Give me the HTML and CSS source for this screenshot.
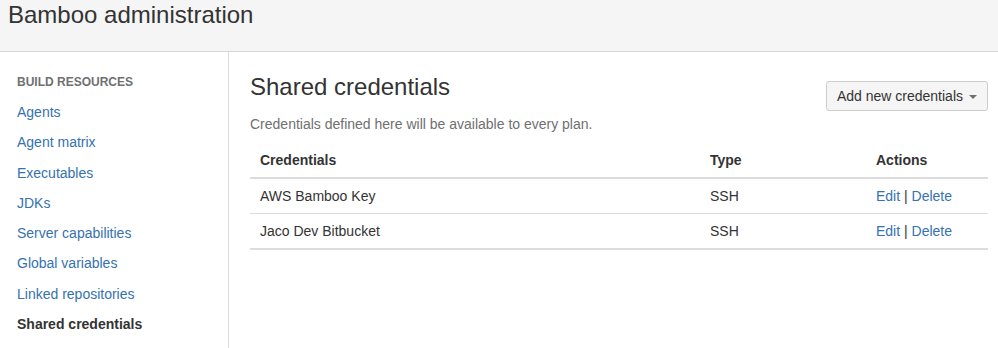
FILE: index.html
```html
<!DOCTYPE html>
<html lang="en">
<head>
    <meta charset="UTF-8">
    <title>Bamboo administration</title>
    <link rel="stylesheet" href="styles.css">
</head>
<body>
    <!-- Page header -->
    <header class="page-header">
        <h1 class="page-title">Bamboo administration</h1>
    </header>

    <div class="layout">
        <!-- Sidebar navigation -->
        <nav class="sidebar">
            <h3 class="nav-heading">BUILD RESOURCES</h3>
            <ul class="nav-list">
                <li><a href="#">Agents</a></li>
                <li><a href="#">Agent matrix</a></li>
                <li><a href="#">Executables</a></li>
                <li><a href="#">JDKs</a></li>
                <li><a href="#">Server capabilities</a></li>
                <li><a href="#">Global variables</a></li>
                <li><a href="#">Linked repositories</a></li>
                <li class="active">Shared credentials</li>
            </ul>
        </nav>

        <!-- Main content -->
        <main class="content">
            <div class="content-header">
                <h2 class="content-title">Shared credentials</h2>
                <button class="dropdown-btn">Add new credentials <span class="caret"></span></button>
            </div>
            <p class="description">Credentials defined here will be available to every plan.</p>

            <table class="cred-table">
                <thead>
                    <tr>
                        <th class="col-name">Credentials</th>
                        <th class="col-type">Type</th>
                        <th class="col-actions">Actions</th>
                    </tr>
                </thead>
                <tbody>
                    <tr>
                        <td>AWS Bamboo Key</td>
                        <td>SSH</td>
                        <td><a href="#">Edit</a> | <a href="#">Delete</a></td>
                    </tr>
                    <tr>
                        <td>Jaco Dev Bitbucket</td>
                        <td>SSH</td>
                        <td><a href="#">Edit</a> | <a href="#">Delete</a></td>
                    </tr>
                </tbody>
            </table>
        </main>
    </div>
</body>
</html>
```

FILE: styles.css
```css
/* ====== Base ====== */
body {
    margin: 0;
    min-height: 100vh;
    display: flex;
    flex-direction: column;
    font-family: "Liberation Sans", Arial, sans-serif;
    font-size: 14px;
    line-height: 20px;
    color: #333;
    background: #fff;
}
a {
    color: #3572b0;
    text-decoration: none;
}

/* ====== Header ====== */
.page-header {
    height: 52px;
    background: #f5f5f5;
    border-bottom: 1px solid #d5d5d5;
    box-sizing: border-box;
    padding-left: 8px;
}
.page-title {
    margin: 0;
    font-size: 24px;
    line-height: 30px;
    font-weight: normal;
    color: #333;
}

/* ====== Layout ====== */
.layout {
    flex: 1;
    display: flex;
}

/* ====== Sidebar ====== */
.sidebar {
    width: 229px;
    flex-shrink: 0;
    border-right: 1px solid #dcdcdc;
    padding: 20px 0 0 17px;
    box-sizing: border-box;
}
.nav-heading {
    margin: 0 0 5px 0;
    font-size: 12px;
    line-height: 20px;
    font-weight: bold;
    color: #707070;
}
.nav-list {
    list-style: none;
    margin: 0;
    padding: 0;
}
.nav-list li {
    padding: 5px 0;
    line-height: 20.3px;
}
.nav-list li.active {
    font-weight: bold;
    color: #333;
}

/* ====== Content ====== */
.content {
    flex: 1;
    padding: 20px 10px 0 21px;
}
.content-header {
    display: flex;
    justify-content: space-between;
    align-items: flex-start;
}
.content-title {
    margin: 0;
    font-size: 24px;
    line-height: 30px;
    font-weight: normal;
    color: #333;
}
.dropdown-btn {
    margin-top: 9px;
    height: 30px;
    padding: 0 10px;
    font-family: inherit;
    font-size: 14px;
    color: #333;
    background: #f5f5f5;
    border: 1px solid #ccc;
    border-radius: 3px;
    display: flex;
    align-items: center;
    gap: 6px;
}
.caret {
    width: 0;
    height: 0;
    border-left: 4px solid transparent;
    border-right: 4px solid transparent;
    border-top: 4px solid #707070;
    margin-top: 1px;
}
.description {
    margin: 3px 0 9px 0;
    color: #707070;
}

/* ====== Table ====== */
.cred-table {
    width: 100%;
    border-collapse: collapse;
}
.cred-table th,
.cred-table td {
    text-align: left;
    padding: 7px 10px;
}
.cred-table th {
    font-weight: bold;
    border-bottom: 2px solid #dcdcdc;
}
.cred-table td {
    border-bottom: 1px solid #dcdcdc;
}
.cred-table tbody tr:last-child td {
    border-bottom: 2px solid #dcdcdc;
}
.col-name {
    width: 430px;
}
.col-type {
    width: 146px;
}
```
